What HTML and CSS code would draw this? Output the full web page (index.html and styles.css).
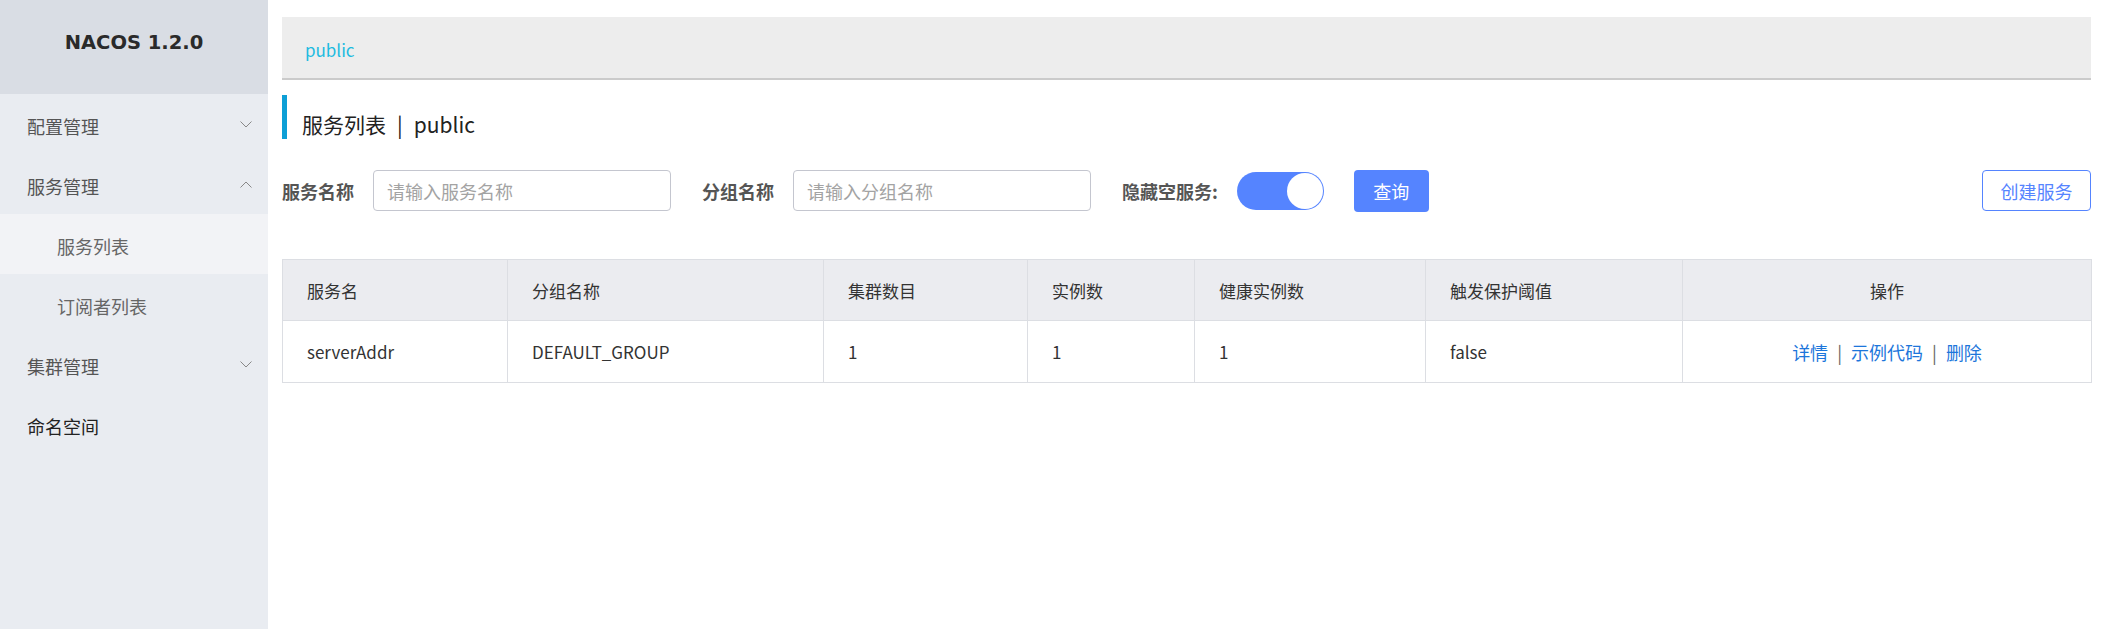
FILE: index.html
```html
<!DOCTYPE html>
<html lang="zh-CN">
<head>
<meta charset="utf-8">
<title>Nacos</title>
<link rel="stylesheet" href="styles.css">
</head>
<body>
<aside class="sidebar">
  <div class="logo">NACOS 1.2.0</div>
  <nav class="menu">
    <div class="menu-item">
      <span>配置管理</span>
      <svg class="chev" width="12" height="7" viewBox="0 0 12 7"><path d="M0.5 0.5 L6 6 L11.5 0.5" fill="none" stroke="#888" stroke-width="1"/></svg>
    </div>
    <div class="menu-item">
      <span>服务管理</span>
      <svg class="chev" width="12" height="7" viewBox="0 0 12 7"><path d="M0.5 6.5 L6 1 L11.5 6.5" fill="none" stroke="#888" stroke-width="1"/></svg>
    </div>
    <div class="menu-item sub active"><span>服务列表</span></div>
    <div class="menu-item sub"><span>订阅者列表</span></div>
    <div class="menu-item">
      <span>集群管理</span>
      <svg class="chev" width="12" height="7" viewBox="0 0 12 7"><path d="M0.5 0.5 L6 6 L11.5 0.5" fill="none" stroke="#888" stroke-width="1"/></svg>
    </div>
    <div class="menu-item dark"><span>命名空间</span></div>
  </nav>
</aside>
<main class="main">
  <div class="ns-bar"><span class="ns-link">public</span></div>
  <h1 class="page-title"><span>服务列表</span><span class="sep">|</span><span>public</span></h1>
  <div class="filters">
    <label class="f-label">服务名称</label>
    <div class="f-input">请输入服务名称</div>
    <label class="f-label">分组名称</label>
    <div class="f-input">请输入分组名称</div>
    <label class="f-label">隐藏空服务:</label>
    <div class="toggle"><span class="knob"></span></div>
    <button class="btn-primary">查询</button>
    <button class="btn-outline">创建服务</button>
  </div>
  <table class="grid">
    <colgroup>
      <col class="c1"><col class="c2"><col class="c3"><col class="c4"><col class="c5"><col class="c6"><col class="c7">
    </colgroup>
    <thead>
      <tr><th>服务名</th><th>分组名称</th><th>集群数目</th><th>实例数</th><th>健康实例数</th><th>触发保护阈值</th><th class="center">操作</th></tr>
    </thead>
    <tbody>
      <tr>
        <td>serverAddr</td><td>DEFAULT_GROUP</td><td>1</td><td>1</td><td>1</td><td>false</td>
        <td class="center ops"><a>详情</a><span class="bar">|</span><a>示例代码</a><span class="bar">|</span><a>删除</a></td>
      </tr>
    </tbody>
  </table>
</main>
</body>
</html>
```

FILE: styles.css
```css
* { box-sizing: border-box; }
html, body { margin: 0; padding: 0; }
body {
  display: flex;
  height: 629px;
  font-family: "Noto Sans CJK SC", "Noto Sans", sans-serif;
  color: #333;
  background: #fff;
  overflow: hidden;
}
.sidebar {
  width: 268px;
  flex: none;
  background: #e9ecf1;
  height: 100%;
}
.logo {
  height: 94px;
  background: #d9dde4;
  display: flex;
  align-items: center;
  justify-content: center;
  padding-bottom: 10px;
  font-family: "DejaVu Sans", sans-serif;
  font-weight: bold;
  font-size: 19.5px;
  color: #2a2a2a;
}
.menu-item {
  height: 60px;
  display: flex;
  align-items: center;
  justify-content: space-between;
  padding: 3px 16px 0 27px;
  font-size: 18px;
  color: #555;
}
.menu-item.sub { padding-left: 57px; color: #666; }
.menu-item.active { background: #f2f3f6; }
.menu-item.dark { color: #222; }
.chev { margin-top: -2px; }
.main {
  flex: 1;
  padding: 17px 11px 0 14px;
  min-width: 0;
}
.ns-bar {
  height: 63px;
  background: #ededed;
  border-bottom: 2px solid #cbcbcb;
  display: flex;
  align-items: center;
  padding: 3px 0 0 23px;
}
.ns-link { color: #1dbbe0; font-size: 17px; }
.page-title {
  margin: 15px 0 0 0;
  height: 44px;
  border-left: 5px solid #0d9fd6;
  padding: 14px 0 0 15px;
  display: flex;
  align-items: center;
  font-weight: normal;
  font-size: 21px;
  color: #222;
}
.page-title .sep { padding: 0 11px; }
.filters {
  margin-top: 31px;
  display: flex;
  align-items: center;
  height: 41px;
}
.f-label {
  font-weight: bold;
  font-size: 18px;
  color: #555;
  margin-right: 19px;
}
.f-input {
  width: 298px;
  height: 41px;
  border: 1px solid #c4c6cf;
  border-radius: 4px;
  display: flex;
  align-items: center;
  padding-left: 13px;
  font-size: 18px;
  color: #a3a3a3;
  margin-right: 31px;
}
.toggle {
  position: relative;
  width: 87px;
  height: 38px;
  border-radius: 19px;
  background: #5584ff;
  margin-right: 30px;
}
.knob {
  position: absolute;
  top: 1px;
  right: 1px;
  width: 36px;
  height: 36px;
  border-radius: 50%;
  background: #fff;
}
.btn-primary {
  width: 75px;
  height: 42px;
  border: none;
  border-radius: 4px;
  background: #5584ff;
  color: #fff;
  font-family: inherit;
  font-size: 18px;
  padding: 0;
}
.btn-outline {
  margin-left: auto;
  width: 109px;
  height: 41px;
  border: 1px solid #5584ff;
  border-radius: 4px;
  background: #fff;
  color: #5584ff;
  font-family: inherit;
  font-size: 18px;
  padding: 0;
}
.grid {
  margin-top: 48px;
  width: 1809px;
  border-collapse: collapse;
  table-layout: fixed;
  font-size: 17px;
}
.c1 { width: 225px; }
.c2 { width: 316px; }
.c3 { width: 204px; }
.c4 { width: 167px; }
.c5 { width: 231px; }
.c6 { width: 257px; }
.c7 { width: 409px; }
.grid th, .grid td {
  border: 1px solid #dcdee3;
  text-align: left;
  padding: 0 0 0 24px;
  font-weight: normal;
  color: #333;
}
.grid th { background: #ebecf0; height: 61px; }
.grid td { height: 62px; }
.grid .center { text-align: center; padding-left: 0; }
.ops { font-size: 18px; }
.ops a { color: #1d76db; }
.ops .bar { color: #666; margin: 0 9px; }
```
